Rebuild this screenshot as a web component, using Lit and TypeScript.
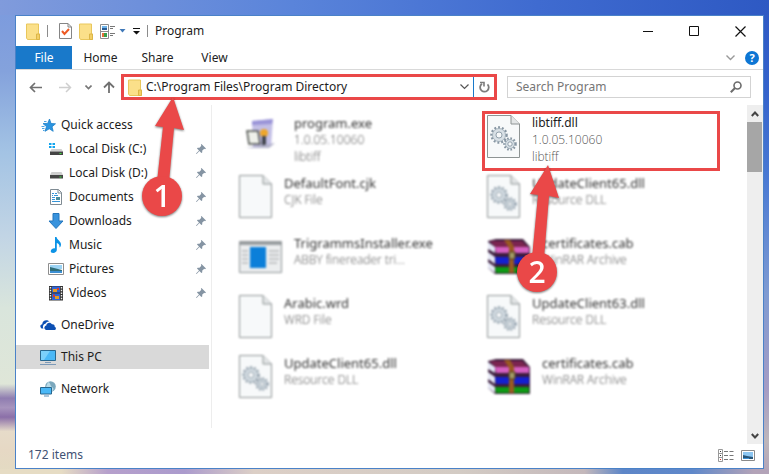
import { LitElement, html, css, svg, TemplateResult } from "lit";
import { customElement, property } from "lit/decorators.js";
import { classMap } from "lit/directives/class-map.js";

const page = svg`
  <path d="M.5.5H24L32.500 9V42.500H.5Z" fill="#f7f9fa" stroke="#8e9494"/>
  <path d="M24 .5V9H32.500" fill="#e3e6e7" stroke="#8e9494"/>`;

const gear = (cx: number, cy: number, r: number, t: number) => svg`
  <circle cx=${cx} cy=${cy} r=${r + 0.5} fill="none" stroke="#8796a3" stroke-width="2.500" stroke-dasharray=${t}/>
  <circle cx=${cx} cy=${cy} r=${r - 0.5} fill="#d8e0e6" stroke="#98a7b2" stroke-width=".8"/>
  <circle cx=${cx} cy=${cy} r=${r / 2.3} fill="#f7f9fa" stroke="#8796a3" stroke-width=".9"/>`;

const books = svg`
  <path d="M1 2L9 0H36L43 8V35H8L1 29Z" fill="#3c1c3c"/>
  <path d="M3 2H35L42 9H9Z" fill="#7b2450"/>
  <path d="M8 8H42V14H9Z" fill="#d45fc0"/>
  <path d="M8 18H42V25H9Z" fill="#1420d0"/>
  <path d="M8 28H42V34H9Z" fill="#0d9a14"/>
  <path d="M1 3L8 8V14L1 10ZM1 13L8 18V25L1 20ZM1 23L8 28V34L1 29Z" fill="#e4e7f5"/>
  <path d="M17 1H23L27 8V34H22V9Z" fill="#9a5a22"/>
  <path d="M22 13H28V20H22Z" fill="#a29b66" stroke="#4c3a18"/>`;

const ICONS: Record<string, { w: number; h: number; art: TemplateResult }> = {
  folder: { w: 14, h: 17, art: svg`<path d="M.5 1H12.500V11H13.500V16.500H1.500L.5 15Z" fill="#fbe08a" stroke="#e9c75c"/><path d="M10.500 11H13.500V16.500H10.500Z" fill="#f3cf66" stroke="#dcb648"/>` },
  check: { w: 13, h: 16, art: svg`<path d="M.5.5H9L12.500 4V15.500H.5Z" fill="#fff" stroke="#858585"/><path d="M9 .5V4H12.500" fill="none" stroke="#858585"/><path d="M3 8L5.500 11L10 6" fill="none" stroke="#ee5a24" stroke-width="2"/>` },
  props: { w: 16, h: 15, art: svg`<path d="M.5.5H8.500V14.500H.5ZM.5 7.500H8.500" fill="#fff" stroke="#8c8c8c"/><path d="M2 2H7V4H2Z" fill="#6fb4ea"/><path d="M2 4H7V6H2Z" fill="#2b5d94"/><path d="M2 9H5V13H2Z" fill="#e46c3a"/><path d="M4 9H7V13H4Z" fill="#37a04a"/><path d="M10 2.500H15M10 4.500H13M10 9.500H15M10 11.500H13" stroke="#777"/>` },
  caret: { w: 7, h: 4, art: svg`<path d="M.5 0H6.500L3.500 3.500Z" fill="#3f78b8"/>` },
  more: { w: 7, h: 7, art: svg`<path d="M0 0H7V1H0ZM0 3H7L3.500 6.500Z" fill="#111"/>` },
  min: { w: 10, h: 10, art: svg`<path d="M0 5.500H10" stroke="#111"/>` },
  max: { w: 10, h: 10, art: svg`<path d="M.5.5H9.500V9.500H.5Z" fill="none" stroke="#111"/>` },
  close: { w: 11, h: 11, art: svg`<path d="M.5.5L10.500 10.500M10.500.5L.5 10.500" stroke="#111" stroke-width="1.200"/>` },
  back: { w: 13, h: 11, art: svg`<path d="M13 5.500H1.500M6 1L1.500 5.500L6 10" fill="none" stroke="#707070" stroke-width="1.700"/>` },
  forward: { w: 13, h: 11, art: svg`<path d="M0 5.500H11.500M7 1L11.500 5.500L7 10" fill="none" stroke="#cfcfcf" stroke-width="1.500"/>` },
  recent: { w: 7, h: 5, art: svg`<path d="M.5.5L3.500 3.500L6.500.5" fill="none" stroke="#777" stroke-width="1.600"/>` },
  up: { w: 12, h: 12, art: svg`<path d="M6 12V1.500M1 6.500L6 1.500L11 6.500" fill="none" stroke="#707070" stroke-width="1.800"/>` },
  chevron: { w: 9, h: 6, art: svg`<path d="M.5.5L4.500 4.500L8.500.5" fill="none" stroke="#555" stroke-width="1.200"/>` },
  fold: { w: 9, h: 6, art: svg`<path d="M.5.5L4.500 4.500L8.500.5" fill="none" stroke="#999" stroke-width="1.400"/>` },
  refresh: { w: 11, h: 12, art: svg`<path d="M3 2.800A4.300 4.300 0 1 0 8.500 3.300" fill="none" stroke="#7c7c7c" stroke-width="1.800"/><path d="M1 1.500H5V5.500" fill="none" stroke="#7c7c7c" stroke-width="1.600"/>` },
  search: { w: 12, h: 12, art: svg`<circle cx="7.500" cy="4.500" r="3.500" fill="none" stroke="#6c6c6c" stroke-width="1.600"/><path d="M5 7L.8 11.200" stroke="#6c6c6c" stroke-width="2"/>` },
  star: { w: 16, h: 16, art: svg`<path d="M9.500 2L11 6.500L15.500 6.800L12 9.800L13.200 14.300L9.300 11.800L5 14.300L6.500 9.600L3 6.600L7.700 6.400Z" fill="#2b94e0" stroke="#1b7fc9" stroke-width=".8"/><path d="M1.500 9.500H4.500M2 11.500H4.500M3 13.500H4.500M4 4.500H6.500" stroke="#4ba3e3"/>` },
  diskC: { w: 16, h: 16, art: svg`<path d="M1 2H3.500V4H1ZM4.500 2H7V4H4.500ZM1 5H3.500V7H1ZM4.500 5H7V7H4.500Z" fill="#12a5ef"/><path d="M3.500 8H13.500L15 10.500H2Z" fill="#cfcfcf"/><path d="M2 10.500H15V14H2Z" fill="#454545"/><path d="M11.500 12H13.500V13H11.500Z" fill="#3ee03e"/>` },
  diskD: { w: 16, h: 16, art: svg`<path d="M3.500 7H13.500L15 10H2Z" fill="#cfcfcf"/><path d="M2 10H15V13.500H2Z" fill="#454545"/><path d="M11.500 11.500H13.500V12.500H11.500Z" fill="#3ee03e"/>` },
  documents: { w: 16, h: 16, art: svg`<path d="M2.500.5H10.500L13.500 3.500V15.500H2.500Z" fill="#fff" stroke="#7f8b93"/><path d="M10 .5V4H13.500" fill="none" stroke="#7f8b93"/><path d="M4 4.500H6M7 4.500H9M4 6.500H5M6 6.500H10M4 8.500H7M4 10.500H7M4 12.500H12" stroke="#3594d8"/><path d="M8 8H12V11H8Z" fill="#4b8c9b"/>` },
  downloads: { w: 16, h: 16, art: svg`<path d="M5 .5H11V8H15L8 15.500L1 8H5Z" fill="#3993dd" stroke="#2476bd"/>` },
  music: { w: 16, h: 16, art: svg`<path d="M7 0H8.500C9 3 13 4 13 7.500C13 9 12.300 10 11.500 10.500C12 8 10.500 6.500 8.800 6V13C8.800 14.600 7 16 5.200 16C3.500 16 2.500 15 2.800 13.700C3.200 12 5.400 11 7 11.500Z" fill="#0c93e6"/>` },
  pictures: { w: 16, h: 16, art: svg`<path d="M.5 2.500H15.500V13.500H.5Z" fill="#fff" stroke="#8e8e8e"/><path d="M2 4H14V8H2Z" fill="#9cd4f5"/><path d="M2 6L6 7L14 9V12H2Z" fill="#2f6d78"/><path d="M2 10H14V12H2Z" fill="#3c8fd3"/>` },
  videos: { w: 16, h: 16, art: svg`<path d="M1 1H15V15.500H1Z" fill="#333"/><path d="M4 1.500H12V7.500H4ZM4 8.500H12V15H4Z" fill="#2f63d8"/><path d="M5 4H9V7H5ZM7 11H11V14H7Z" fill="#e59b25"/><path d="M9 3H11V5H9ZM5 9.500H7V12H5Z" fill="#d83a2b"/><path d="M2.500 2V15M13.500 2V15" stroke="#eee" stroke-width="1.400" stroke-dasharray="1.500 1.200"/>` },
  onedrive: { w: 16, h: 16, art: svg`<path d="M1.500 11.500C-.5 10 .2 7.500 2.300 7.300C2 4 6.500 1.500 9.500 4.500C7.500 4.200 6 5.300 5.500 6.800C3.500 7 2 9.500 3.500 11.500Z" fill="#0c4fb3"/><path d="M6 13C3.800 12.500 3.800 9 6.300 8.500C6.500 5.500 10.500 4.600 12 7.300C14 7 15 8.500 14.600 9.800C16.500 10.300 16.200 13 14.500 13Z" fill="#0c4fb3"/>` },
  pc: { w: 16, h: 16, art: svg`<path d="M.5 1.500H15.500V11.500H.5Z" fill="#4ab8f7" stroke="#28678f"/><path d="M1 2H10L4 11H1Z" fill="#7bd0fb"/><path d="M5 13.500H11M0 15.500H16" stroke="#7d9ab8"/>` },
  network: { w: 16, h: 16, art: svg`<circle cx="10.500" cy="5.500" r="5.300" fill="#7ba8bd"/><path d="M8 1C11 2 10 5 12 6S14 9 12 10.500L6 6Z" fill="#b9dbe8"/><path d="M.5 6.500H11.500V13H.5Z" fill="#4ab8f7" stroke="#28678f"/><path d="M4 15H9" stroke="#5a8fb8"/>` },
  pin: { w: 10, h: 10, art: svg`<path d="M5.500 0L10 4.500L9 5.200L8.300 4.800L6.300 6.600L6.200 8.600L5.400 9L3.400 7L.6 10L0 9.400L3 6.600L1 4.600L1.600 3.800L3.500 3.800L5.300 1.800L4.900 .8Z" fill="#8594a3"/>` },
  details: { w: 16, h: 13, art: svg`<path d="M.5.5H4.500V12.500H.5ZM.5 4.500H4.500M.5 8.500H4.500" fill="#fff" stroke="#999"/><path d="M2 2H3V3H2ZM2 6H3V7H2Z" fill="#333"/><path d="M2 10H3V11H2Z" fill="#d22"/><path d="M6 2.500H10M11.500 2.500H15.500M6 6.500H10M11.500 6.500H15.500M6 10.500H10M11.500 10.500H15.500" stroke="#777"/>` },
  large: { w: 14, h: 11, art: svg`<path d="M.5.5H13.500V10.500H.5Z" fill="#fff" stroke="#8a8a8a"/><path d="M2 2H12V9H2Z" fill="#8cc6f2"/><path d="M2 5L6 6L12 7V9H2Z" fill="#27567a"/><path d="M2 8H8V9H2Z" fill="#3c8fd3"/>` },
  scrollUp: { w: 8, h: 6, art: svg`<path d="M.8 5L4 1.500L7.200 5" fill="none" stroke="#444" stroke-width="2"/>` },
  scrollDown: { w: 8, h: 6, art: svg`<path d="M.8 1L4 4.500L7.200 1" fill="none" stroke="#444" stroke-width="2"/>` },
  file: { w: 33, h: 43, art: page },
  dll: { w: 33, h: 43, art: svg`${page}${gear(12, 20, 7, 1.9)}${gear(23, 29, 5, 1.6)}` },
  program: { w: 43, h: 43, art: svg`<path d="M13 6L34 4L32 32H14Z" fill="#c3bfe6"/><path d="M13 6L34 4L33 9L13 10Z" fill="#9a94d8"/><path d="M8 16H19L21 29H10Z" fill="#eef0ea" stroke="#4c504c" stroke-width="1.500"/><circle cx="25" cy="18" r="4" fill="#eea62b"/><path d="M23 21H27V32H23Z" fill="#40444c"/><path d="M7 33L36 28L30 33Z" fill="#b4b4cc"/>` },
  window: { w: 43, h: 32, art: svg`<path d="M.5.5H42.500V31.500H.5Z" fill="#eceeef" stroke="#8f9496"/><path d="M1 1H42V4H1Z" fill="#9a9fa2"/><path d="M3 10H9M3 14H9M3 18H9M3 22H9M30 10H40M30 14H40M30 18H40M30 22H38" stroke="#c4c6c8" stroke-width="2"/><path d="M11 6H27V27H11Z" fill="#0b7fd9"/>` },
  rar: { w: 43, h: 36, art: books },
};

const icon = (name: string) => {
  const i = ICONS[name];
  return html`<svg class="icon" width=${i.w} height=${i.h} viewBox="0 0 ${i.w} ${i.h}" aria-hidden="true">${i.art}</svg>`;
};

interface Place { icon: string; label: string; child?: boolean; apart?: boolean; current?: boolean }
const PLACES: Place[] = [
  { icon: "star", label: "Quick access" },
  { icon: "diskC", label: "Local Disk (C:)", child: true },
  { icon: "diskD", label: "Local Disk (D:)", child: true },
  { icon: "documents", label: "Documents", child: true },
  { icon: "downloads", label: "Downloads", child: true },
  { icon: "music", label: "Music", child: true },
  { icon: "pictures", label: "Pictures", child: true },
  { icon: "videos", label: "Videos", child: true },
  { icon: "onedrive", label: "OneDrive", apart: true },
  { icon: "pc", label: "This PC", apart: true, current: true },
  { icon: "network", label: "Network", apart: true },
];

interface Entry { icon: string; name: string; info: string[]; marked?: boolean }
const FILES: Entry[] = [
  { icon: "program", name: "program.exe", info: ["1.0.05.10060", "libtiff"] },
  { icon: "dll", name: "libtiff.dll", info: ["1.0.05.10060", "libtiff"], marked: true },
  { icon: "file", name: "DefaultFont.cjk", info: ["CJK File"] },
  { icon: "dll", name: "UpdateClient65.dll", info: ["Resource DLL"] },
  { icon: "window", name: "TrigrammsInstaller.exe", info: ["ABBY finereader tri…"] },
  { icon: "rar", name: "certificates.cab", info: ["WinRAR Archive"] },
  { icon: "file", name: "Arabic.wrd", info: ["WRD File"] },
  { icon: "dll", name: "UpdateClient63.dll", info: ["Resource DLL"] },
  { icon: "dll", name: "UpdateClient65.dll", info: ["Resource DLL"] },
  { icon: "rar", name: "certificates.cab", info: ["WinRAR Archive"] },
];

/** Red pointer with a numbered disc at its tail. */
@customElement("step-arrow")
export class StepArrow extends LitElement {
  @property({ type: Number }) step = 1;
  static styles = css`
    :host { display: block; pointer-events: none; filter: drop-shadow(0 1px 1px #0008); }
    .art { display: block; overflow: visible; }
    .num { font: 600 30px "Open Sans", "Noto Sans", sans-serif; fill: #fff; text-anchor: middle; }
  `;
  render() {
    const y = this.step === 1 ? 99 : 107;
    return html`<svg class="art" width="42" height=${y + 21} viewBox="0 0 42 ${y + 21}" role="img" aria-label="Step ${this.step}">
      <path d="M31 0L42 33L32 31L27 ${y - 14}H15L21 30L13 29Z" fill="#ea4848"/>
      <circle cx="20" cy=${y} r="20" fill="#ea4848"/>
      <text class="num" x="20" y=${y + 11}>${this.step}</text>
    </svg>`;
  }
}

@customElement("app-root")
export class AppRoot extends LitElement {
  static styles = css`
    * { box-sizing: border-box; }
    :host {
      display: flex;
      min-height: 100vh;
      box-sizing: border-box;
      padding: 15px 5px 5px 15px;
      font: 12px/16px "Noto Sans", "Open Sans", sans-serif;
      color: #1c1c1c;
      background:
        linear-gradient(to right, #809bdc, #5a84da 38%, #3f6bd0 70%, #2e59c3) top / 100% 15px no-repeat,
        linear-gradient(to right, #e6dcc4 8%, #b6a0cc 14%, #ab9bcd 24%, #dccfc6 33%, #d3cbc4 60%, #c4b8bb 76%, #5d86c8 81%, #5f88ca 90%, #b3a3b8 98%) bottom / 100% 5px no-repeat,
        linear-gradient(to bottom, #2e59c3, #3564cc 20%, #4a7ad4 38%, #7f9bd2 62%, #a59cc4 82%, #bdb6bb 93%, #b3a3b8) right / 5px 100% no-repeat,
        linear-gradient(to bottom, #7b9ade, #84a2dc 15%, #a3c3e4 32%, #c2d5e5 50%, #d9e5dc 65%, #dfe6d8 81%, #8f7db0 84%, #a794bd 86%, #8b6fa8 88%, #e6dbc9 91%, #e6d8c4 95%, #e3dbc2) left / 15px 100% no-repeat,
        #c9d3dc;
    }
    button, input { font: inherit; color: inherit; background: none; border: 0; margin: 0; padding: 0; min-width: 0; }
    button { display: flex; align-items: center; justify-content: center; }
    .icon { display: block; flex: none; }
    .window { flex: 1; min-width: 0; display: flex; flex-direction: column; background: #fff; border: 1px solid #4a82c8; }
    .title { display: flex; align-items: center; height: 30px; padding-left: 10px; }
    .quick { display: flex; align-items: center; gap: 7px; }
    .pair { gap: 3px; }
    .bar { width: 1px; height: 12px; background: #8c8c8c; }
    .first { margin-right: 4px; }
    .caption { flex: 1; margin: 0 7px; }
    .controls { display: flex; }
    .controls button { width: 46px; height: 30px; }
    .tabs { display: flex; align-items: stretch; height: 24px; border-bottom: 1px solid #d9d9d9; }
    .tab { width: 57px; color: #222; }
    .file { width: 56px; color: #fff; background: #1979ca; }
    .fold { margin-left: auto; width: 20px; }
    .help { align-self: center; width: 14px; height: 14px; margin: 0 4px 0 5px; border-radius: 50%; background: #0d76d4; color: #fff; font-weight: 700; font-size: 11px; line-height: 14px; }
    .go { display: flex; padding: 4px 12px 5px 4px; }
    .history { display: flex; align-items: center; }
    .history button { height: 26px; width: 30px; }
    .history .small { width: 17px; }
    .history .rise { width: 24px; }
    .address { position: relative; flex: 1; display: flex; align-items: center; height: 26px; margin-right: 10px; border: 3px solid #ea4848; padding-left: 4px; }
    .address input { flex: 1; margin-left: 4px; outline: 0; }
    .address button { width: 18px; height: 20px; }
    .address .reload { width: 21px; border-left: 1px solid #1979ca; }
    .search { display: flex; align-items: center; width: 244px; height: 22px; margin-top: 2px; padding: 0 8px; border: 1px solid #d3d3d3; }
    .search input { flex: 1; outline: 0; }
    .search input::placeholder { color: #767676; opacity: 1; }
    .one, .two { position: absolute; z-index: 2; }
    .one { left: 18px; top: 20px; }
    .two { left: 35px; top: 54px; }
    .body { flex: 1; display: flex; min-height: 0; }
    .places { width: 196px; margin: 0 0 16px; padding: 8px 2px 0 0; border-right: 1px solid #ededed; list-style: none; }
    .place { display: flex; align-items: center; gap: 5px; height: 24px; padding: 0 3px 0 24px; color: #1c1c1c; text-decoration: none; }
    .child { padding-left: 32px; }
    .apart { margin-top: 8px; }
    .current { background: #d9d9d9; }
    .label { flex: 1; white-space: nowrap; }
    .files { flex: 1; display: grid; grid-template-columns: repeat(2, minmax(0, 238px)); grid-auto-rows: 60px; column-gap: 10px; margin: 0; padding: 6px 16px 0 22px; list-style: none; }
    .entry { position: relative; display: flex; gap: 12px; padding: 4px 5px; }
    .dim { filter: blur(1px); }
    .dim .name { font-size: 13px; color: #333; }
    .marked { outline: 3px solid #ea4848; outline-offset: -3px; }
    .text { display: grid; align-content: start; row-gap: 1px; }
    .name, .info { white-space: nowrap; }
    .info { color: #555; font-family: "Open Sans", "Noto Sans", sans-serif; font-weight: 300; }
    .art { display: flex; height: 43px; align-items: center; }
    .scroll { display: flex; flex-direction: column; align-items: stretch; width: 16px; background: #eee; }
    .scroll button { height: 17px; }
    .thumb { height: 50px; margin-right: 1px; background: #a6a6a6; }
    .scroll .down { margin-top: auto; }
    .status { display: flex; align-items: center; gap: 7px; height: 24px; padding: 0 8px 2px 12px; color: #3f5274; }
    .count { flex: 1; }
  `;

  private place(p: Place) {
    return html`<li>
      <a href="#" class=${classMap({ place: true, child: !!p.child, apart: !!p.apart, current: !!p.current })}>
        ${icon(p.icon)}<span class="label">${p.label}</span>${p.child ? icon("pin") : ""}
      </a>
    </li>`;
  }

  private entry(f: Entry) {
    return html`<li class=${classMap({ entry: true, marked: !!f.marked, dim: !f.marked })}>
      <span class="art">${icon(f.icon)}</span>
      <span class="text">
        <span class="name">${f.name}</span>
        ${f.info.map((t) => html`<span class="info">${t}</span>`)}
      </span>
      ${f.marked ? html`<step-arrow class="two" .step=${2}></step-arrow>` : ""}
    </li>`;
  }

  render() {
    return html`<main class="window">
      <header class="title">
        <div class="quick">
          ${icon("folder")}<span class="bar first"></span>
          <button aria-label="Properties">${icon("check")}</button>
          <button aria-label="New folder">${icon("folder")}</button>
          <button class="pair" aria-label="View options">${icon("props")}${icon("caret")}</button>
          <button aria-label="Customize toolbar">${icon("more")}</button>
          <span class="bar"></span>
        </div>
        <span class="caption">Program</span>
        <div class="controls">
          <button aria-label="Minimize">${icon("min")}</button>
          <button aria-label="Maximize">${icon("max")}</button>
          <button aria-label="Close">${icon("close")}</button>
        </div>
      </header>
      <nav class="tabs" aria-label="Ribbon">
        <button class="tab file">File</button>
        <button class="tab">Home</button>
        <button class="tab">Share</button>
        <button class="tab">View</button>
        <button class="fold" aria-label="Expand ribbon">${icon("fold")}</button>
        <button class="help" aria-label="Help">?</button>
      </nav>
      <div class="go">
        <div class="history">
          <button aria-label="Back">${icon("back")}</button>
          <button aria-label="Forward">${icon("forward")}</button>
          <button class="small" aria-label="Recent">${icon("recent")}</button>
          <button class="rise" aria-label="Up">${icon("up")}</button>
        </div>
        <div class="address">
          ${icon("folder")}
          <input aria-label="Address" value="C:\\Program Files\\Program Directory" />
          <button aria-label="Show addresses">${icon("chevron")}</button>
          <button class="reload" aria-label="Refresh">${icon("refresh")}</button>
          <step-arrow class="one" .step=${1}></step-arrow>
        </div>
        <div class="search">
          <input aria-label="Search" placeholder="Search Program" />
          ${icon("search")}
        </div>
      </div>
      <div class="body">
        <ul class="places">${PLACES.map((p) => this.place(p))}</ul>
        <ul class="files">${FILES.map((f) => this.entry(f))}</ul>
        <div class="scroll">
          <button aria-label="Scroll up">${icon("scrollUp")}</button>
          <div class="thumb"></div>
          <button class="down" aria-label="Scroll down">${icon("scrollDown")}</button>
        </div>
      </div>
      <footer class="status">
        <span class="count">172 items</span>
        <button aria-label="Details view">${icon("details")}</button>
        <button aria-label="Large icons view">${icon("large")}</button>
      </footer>
    </main>`;
  }
}
